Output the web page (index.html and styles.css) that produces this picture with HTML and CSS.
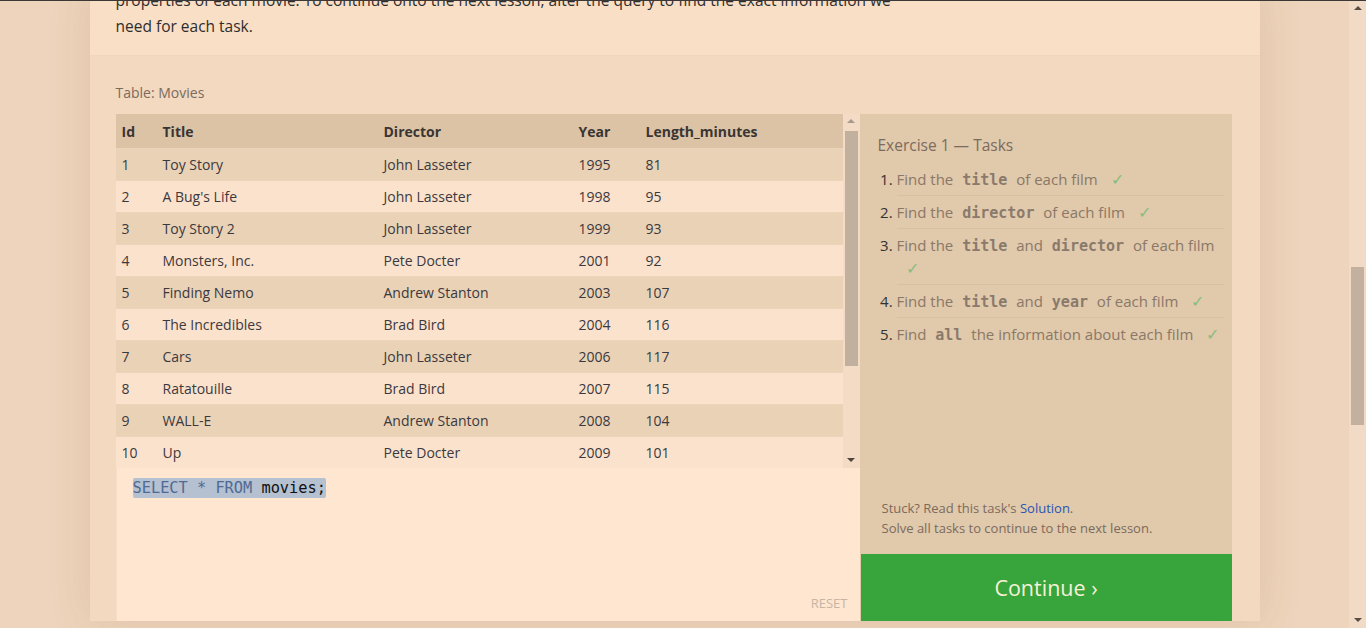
FILE: index.html
```html
<!DOCTYPE html>
<html>
<head>
<meta charset="utf-8">
<link rel="stylesheet" href="styles.css">
</head>
<body>
<div class="topline"></div>
<div class="page-scroll">
  <div class="ps-arrow ps-up"></div>
  <div class="ps-thumb"></div>
  <div class="ps-arrow ps-down"></div>
</div>
<main class="wrap">
  <section class="lesson">
    <p>properties of each movie. To continue onto the next lesson, alter the query to find the exact information we need for each task.</p>
  </section>
  <section class="exercise">
    <div class="table-label">Table: Movies</div>
    <div class="workspace">
      <div class="left">
        <div class="table-box">
          <div class="table-scroll">
            <table class="movies">
              <thead>
                <tr><th class="c-id">Id</th><th class="c-title">Title</th><th class="c-dir">Director</th><th class="c-year">Year</th><th class="c-len">Length_minutes</th></tr>
              </thead>
              <tbody>
                <tr><td>1</td><td>Toy Story</td><td>John Lasseter</td><td>1995</td><td>81</td></tr>
                <tr><td>2</td><td>A Bug's Life</td><td>John Lasseter</td><td>1998</td><td>95</td></tr>
                <tr><td>3</td><td>Toy Story 2</td><td>John Lasseter</td><td>1999</td><td>93</td></tr>
                <tr><td>4</td><td>Monsters, Inc.</td><td>Pete Docter</td><td>2001</td><td>92</td></tr>
                <tr><td>5</td><td>Finding Nemo</td><td>Andrew Stanton</td><td>2003</td><td>107</td></tr>
                <tr><td>6</td><td>The Incredibles</td><td>Brad Bird</td><td>2004</td><td>116</td></tr>
                <tr><td>7</td><td>Cars</td><td>John Lasseter</td><td>2006</td><td>117</td></tr>
                <tr><td>8</td><td>Ratatouille</td><td>Brad Bird</td><td>2007</td><td>115</td></tr>
                <tr><td>9</td><td>WALL-E</td><td>Andrew Stanton</td><td>2008</td><td>104</td></tr>
                <tr><td>10</td><td>Up</td><td>Pete Docter</td><td>2009</td><td>101</td></tr>
                <tr><td>11</td><td>Toy Story 3</td><td>Lee Unkrich</td><td>2010</td><td>103</td></tr>
                <tr><td>12</td><td>Cars 2</td><td>John Lasseter</td><td>2011</td><td>120</td></tr>
              </tbody>
            </table>
          </div>
          <div class="tscroll">
            <div class="ts-arrow ts-up"></div>
            <div class="ts-thumb"></div>
            <div class="ts-arrow ts-down"></div>
          </div>
        </div>
        <div class="editor">
          <div class="code"><span class="sel"><span class="kw">SELECT * FROM</span> movies;</span></div>
          <div class="reset">RESET</div>
        </div>
      </div>
      <aside class="tasks">
        <div class="tasks-body">
          <h3 class="tasks-title">Exercise 1 — Tasks</h3>
          <ol class="task-list">
            <li>Find the <code>title</code> of each film <span class="check">✓</span></li>
            <li>Find the <code>director</code> of each film <span class="check">✓</span></li>
            <li>Find the <code>title</code> and <code>director</code> of each film <span class="check">✓</span></li>
            <li>Find the <code>title</code> and <code>year</code> of each film <span class="check">✓</span></li>
            <li>Find <code>all</code> the information about each film <span class="check">✓</span></li>
          </ol>
          <div class="help">
            <div>Stuck? Read this task's <a class="sol">Solution</a>.</div>
            <div>Solve all tasks to continue to the next lesson.</div>
          </div>
        </div>
        <div class="continue">Continue ›</div>
      </aside>
    </div>
  </section>
</main>
</body>
</html>
```

FILE: styles.css
```css
html, body {
  margin: 0;
  padding: 0;
  overflow: hidden;
  height: 100%;
}
body {
  background: #eed4bc;
  font-family: "Open Sans", "Noto Sans", sans-serif;
  color: #333;
  padding-right: 17px;
  box-sizing: border-box;
}
.topline {
  position: fixed;
  left: 0; right: 0; top: 0;
  height: 1px;
  background: #3c3838;
  z-index: 5;
}
.page-scroll {
  position: fixed;
  right: 0; top: 0; bottom: 0;
  width: 17px;
  background: #f1dac6;
  display: flex;
  flex-direction: column;
  align-items: center;
  z-index: 4;
}
.ps-arrow { width: 0; height: 0; border-left: 4px solid transparent; border-right: 4px solid transparent; }
.ps-up { border-bottom: 4px solid #5b4c42; margin-top: 6px; }
.ps-down { border-top: 4px solid #5b4c42; margin-top: auto; margin-bottom: 6px; }
.ps-thumb {
  width: 13px;
  height: 158px;
  background: #c3b09f;
  margin-top: 257px;
}
.wrap {
  width: 1170px;
  margin: 0 auto;
  box-shadow: 0 0 40px rgba(130, 85, 40, 0.14);
  min-height: 100%;
  background: #f2d9c0;
}
.lesson {
  background: #f9dfc6;
  padding: 0 26px 16px;
}
.lesson p {
  margin: -13px 0 0;
  font-size: 15.5px;
  line-height: 26px;
  width: 790px;
  color: #2e2e2e;
}
.exercise {
  background: #f2d9c0;
  border-top: 1px solid #f0d6bd;
  padding: 27px 28px 0 26px;
}
.table-label {
  font-size: 14px;
  line-height: 20px;
  color: #7a6b5d;
  margin-bottom: 11px;
}
.workspace {
  display: flex;
}
.left {
  width: 744px;
  display: flex;
  flex-direction: column;
}
.table-box {
  display: flex;
  height: 354px;
}
.table-scroll {
  width: 727px;
  overflow: hidden;
}
.movies {
  width: 727px;
  border-collapse: collapse;
  font-size: 14px;
  table-layout: fixed;
}
.movies th, .movies td {
  text-align: left;
  padding: 0 6px;
  white-space: nowrap;
}
.movies th {
  height: 34px;
  background: #dcc3a6;
  font-weight: 700;
  color: #3a3533;
}
.movies td {
  height: 30px;
  border-top: 1px solid #ecd4ba;
  color: #3b3940;
  padding-bottom: 1px;
}
.movies tbody tr:nth-child(odd) td { background: #e9d2b6; }
.movies tbody tr:nth-child(even) td { background: #fbe2cc; }
.c-id { width: 29px; }
.c-title { width: 209px; }
.c-dir { width: 183px; }
.c-year { width: 55px; }
.tscroll {
  width: 17px;
  background: #f3dbc5;
  display: flex;
  flex-direction: column;
  align-items: center;
}
.ts-arrow { width: 0; height: 0; border-left: 4px solid transparent; border-right: 4px solid transparent; }
.ts-up { border-bottom: 4px solid #a8998c; margin-top: 5px; }
.ts-down { border-top: 4px solid #4f443d; margin-top: auto; margin-bottom: 6px; }
.ts-thumb {
  width: 13px;
  height: 235px;
  background: #c2b09f;
  margin-top: 8px;
}
.editor {
  height: 153px;
  background: #fee6d0;
  box-sizing: border-box;
  padding: 10px 12px 9px 17px;
  display: flex;
  flex-direction: column;
  border-left: 1px solid #f4dcc5;
}
.code {
  font-family: "DejaVu Sans Mono", "Liberation Mono", monospace;
  font-size: 15.3px;
  line-height: 20px;
  color: #111;
  margin-left: -1px;
}
.sel {
  background: #b5c0d0;
  border-radius: 2px;
  padding: 1px 0;
}
.kw { color: #4f6a94; }
.reset {
  margin-top: auto;
  align-self: flex-end;
  font-size: 13px;
  line-height: 18px;
  color: #c6b5a4;
}
.tasks {
  width: 372px;
  background: #e1c9ab;
  display: flex;
  flex-direction: column;
}
.tasks-body {
  flex: 1;
  padding: 20px 8px 16px 18px;
  display: flex;
  flex-direction: column;
}
.tasks-title {
  margin: 0 0 7px;
  font-size: 15.5px;
  font-weight: 400;
  line-height: 22px;
  color: #7b6b5e;
}
.task-list {
  margin: 0;
  padding-left: 19px;
  font-size: 15px;
  color: #8a7868;
}
.task-list li {
  line-height: 23px;
  padding: 5px 0 4px;
  border-bottom: 1px solid #d8c0a2;
}
.task-list li:last-child { border-bottom: none; }
.task-list li::marker { color: #333; }
.task-list code {
  font-family: "DejaVu Sans Mono", "Liberation Mono", monospace;
  font-weight: 700;
  font-size: 15px;
  line-height: 1;
  color: #8a7a6c;
  padding: 0 5px;
}
.check {
  color: #86bd80;
  margin-left: 9px;
  font-size: 16px;
  line-height: 1;
}
.help {
  margin-top: auto;
  padding-left: 4px;
  font-size: 13px;
  line-height: 20px;
  color: #7b6b5d;
}
.sol { color: #2a55b0; }
.continue {
  height: 67px;
  margin-left: 1px;
  background: #38a43c;
  color: #f6f2d8;
  font-size: 21.5px;
  display: flex;
  align-items: center;
  justify-content: center;
}
```
